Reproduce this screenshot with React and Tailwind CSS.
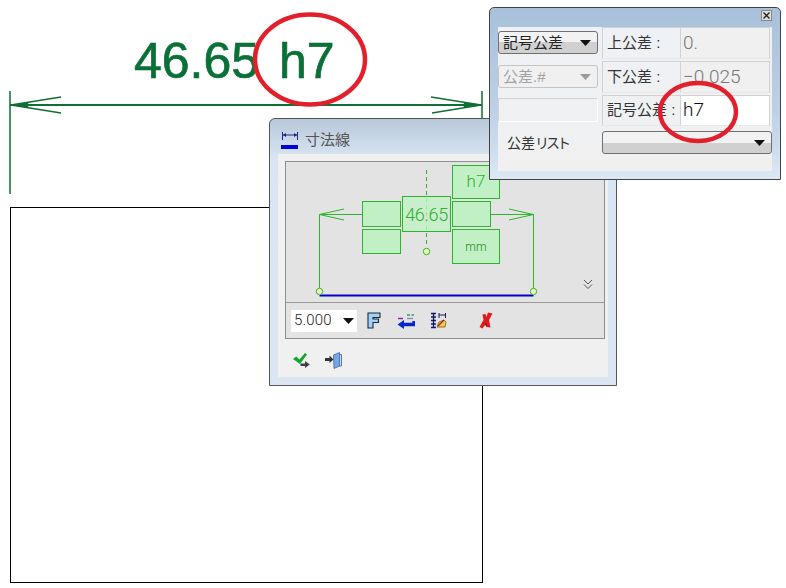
const SANS = "font-['Liberation_Sans','Noto_Sans_CJK_JP',sans-serif]"
const THIN = "font-['Roboto','Liberation_Sans',sans-serif] font-light"

function Arrow({ className = '' }) {
  return (
    <svg width="11" height="6" viewBox="0 0 11 6" className={className}>
      <path d="M0 0H11L5.5 6Z" fill="currentColor" />
    </svg>
  )
}

function Combo({ label, disabled, className = '' }) {
  const look = disabled
    ? 'border-[#c4c4c4] text-[#a2a2a2] bg-[#f0f0f0]'
    : 'border-[#6f6f6f] text-[#222] bg-gradient-to-b from-[#f2f2f2] from-50% to-[#d0d0d0] to-50%'
  return (
    <div className={`flex h-[23px] items-center justify-between rounded-[3px] border pl-[4px] pr-[6px] text-[15px] ${look} ${className}`}>
      <span className="translate-y-[1px]">{label}</span>
      <Arrow className={disabled ? 'text-[#9a9a9a]' : 'text-[#111]'} />
    </div>
  )
}

function ToleranceRow({ label, value, active, tall }) {
  return (
    <div className={`mr-[2px] flex ${tall ? 'h-[31px]' : 'h-[32px]'} border border-[#d2d2d2] border-b-[#e8e8e8]`}>
      <div className="flex w-[77px] items-center whitespace-nowrap pl-[4px] text-[15px] text-[#333]">{label}</div>
      <div
        className={`flex flex-1 items-center border-l border-[#d2d2d2] pl-[2px] text-[19px] ${THIN} ${
          active ? 'bg-white text-[#111]' : 'bg-[#f0f0f0] text-[#777]'
        }`}
      >
        {value}
      </div>
    </div>
  )
}

function TitleIcon() {
  return (
    <svg width="18" height="20" viewBox="0 0 18 20">
      <path d="M1.5 1V9M16.5 1V9" stroke="#1a2a80" strokeWidth="1" />
      <path d="M2 4H16" stroke="#1a2a80" strokeWidth="1" />
      <path d="M2 4L5 2V6ZM16 4L13 2V6Z" fill="#1a2a80" />
      <rect x="0" y="14" width="17" height="4" fill="#0000e0" />
    </svg>
  )
}

function FontIcon() {
  return (
    <svg width="14" height="17" viewBox="0 0 14 17">
      <path d="M1 1H13V5.5H6V7H11.5V10.5H6V16H1Z" fill="#9fd2f5" stroke="#1c2a3c" strokeWidth="1.1" />
    </svg>
  )
}

function WrapIcon() {
  return (
    <svg width="18" height="16" viewBox="0 0 18 16">
      <path d="M1 5.5H6" stroke="#a020a0" strokeWidth="1.5" />
      <path d="M10 2H13M14.5 2H17" stroke="#3a9a6a" strokeWidth="1.4" />
      <path d="M10 5.5H16" stroke="#8888a8" strokeWidth="1.3" />
      <path d="M17 8V11.5H6" fill="none" stroke="#0a28c8" strokeWidth="3.4" />
      <path d="M0.5 11.5L7 7V16Z" fill="#0a28c8" />
    </svg>
  )
}

function RulerIcon() {
  return (
    <svg width="17" height="17" viewBox="0 0 17 17">
      <path d="M1 1.5H6M1 15.5H6M3.5 1.5V15.5" stroke="#101a60" strokeWidth="1.3" />
      <path d="M1 5H6M1 8.5H6M1 12H6" stroke="#101a60" strokeWidth="1.3" />
      <path d="M9 1V6M15.5 1V6M9 3H15.5" stroke="#101a60" strokeWidth="1" />
      <path d="M7 15L9 10L14 8L16 10L15 15Z" fill="#f0d050" stroke="#7a5a10" strokeWidth="0.8" />
      <path d="M8 14L14 8" stroke="#b02020" strokeWidth="1.2" />
    </svg>
  )
}

function DeleteIcon() {
  return (
    <svg width="14" height="17" viewBox="0 0 14 17">
      <path d="M9 0.5L13.5 1.5L10 8L11.5 15.5L7.5 15L6.5 11L3.5 16.5L0.5 15L4.5 8L3.5 2.5L6.5 2L7.5 5Z" fill="#e01818" />
      <path d="M3.5 16.5L7 10L8 15L6 13Z" fill="#801010" />
    </svg>
  )
}

function OkIcon() {
  return (
    <svg width="17" height="15" viewBox="0 0 17 15">
      <path d="M0 6L3.2 3.5L6.5 6.5L12 0L14 1.5L7 11Z" fill="#10a828" />
      <path d="M7.5 10.5H12V8L16.8 11.5L12 15V13H7.5Z" fill="#404040" />
    </svg>
  )
}

function ExitIcon() {
  return (
    <svg width="17" height="17" viewBox="0 0 17 17">
      <path d="M10 2.5H16.5V14H14" fill="#d0e0f8" stroke="#4a78c0" strokeWidth="1" />
      <path d="M8.5 3L14.5 0.5V14L9 16.5Z" fill="#78a4e8" stroke="#3a68b0" strokeWidth="0.8" />
      <path d="M0 6H4.5V3.5L8.5 7.5L4.5 11V9H0Z" fill="#333" />
    </svg>
  )
}

function Node({ className, children }) {
  return (
    <div className={`absolute flex items-center justify-center border border-[#2cb52c] bg-[#c0f0c4] text-[#30b030] ${THIN} ${className}`}>
      {children}
    </div>
  )
}

function DimensionPreview() {
  return (
    <div className="relative h-[141px] border-b border-[#9a9a9a]">
      <svg width="319" height="140" viewBox="0 0 319 140" className="absolute left-0 top-0">
        <g fill="none" stroke="#2cb52c">
          <path d="M33.5 126V52.5H76" />
          <path d="M247.5 126V52.5H205" />
          <path d="M33.5 52.5L58 47M33.5 52.5L58 58" />
          <path d="M247.5 52.5L223 47M247.5 52.5L223 58" />
          <path d="M140.5 8V85" strokeDasharray="4 3" />
        </g>
        <path d="M33.5 133.5H247.5" stroke="#0000d0" strokeWidth="2" />
        <g fill="#eef8b8" stroke="#2cb52c">
          <circle cx="33.5" cy="129.5" r="3.2" />
          <circle cx="247.5" cy="129.5" r="3.2" />
          <circle cx="140.5" cy="89.5" r="3.2" />
        </g>
        <path d="M298 118L302 122L306 118M298 122.5L302 126.5L306 122.5" fill="none" stroke="#555" strokeWidth="1" />
      </svg>
      <Node className="left-[166px] top-[3px] h-[34px] w-[48px] text-[17px]">h7</Node>
      <Node className="left-[116px] top-[34px] h-[36px] w-[49px] bg-[#c0f0c4]/80 text-[18px] tracking-[-0.3px]">46.65</Node>
      <Node className="left-[76px] top-[39px] h-[26px] w-[39px]" />
      <Node className="left-[76px] top-[67px] h-[25px] w-[39px]" />
      <Node className="left-[166px] top-[39px] h-[26px] w-[39px]" />
      <Node className="left-[166px] top-[67px] h-[35px] w-[48px] text-[12px] !text-[#208a20]">mm</Node>
    </div>
  )
}

function DimensionWindow() {
  return (
    <div className="absolute left-[269px] top-[118px] flex h-[268px] w-[348px] flex-col rounded-t-[6px] border border-[#555] bg-gradient-to-b from-[#b8c8da] from-0% via-[#d9e5f2] via-15% to-[#dbe6f2] px-[8px] pb-[8px]">
      <div className="flex h-[35px] flex-none items-center gap-[6px] pl-[3px] pt-[8px]">
        <TitleIcon />
        <span className="text-[15px] text-[#555]">寸法線</span>
      </div>
      <div className="flex flex-1 flex-col bg-[#f0f0f0] px-[7px] pt-[7px]">
        <div className="w-[320px] border border-[#8e8e8e] bg-[#e3e3e3]">
          <DimensionPreview />
          <div className="flex h-[35px] items-center pl-[5px]">
            <div className={`flex h-[22px] w-[66px] items-center justify-between bg-white pl-[3px] pr-[3px] text-[15px] tracking-[0.2px] text-[#222] ${THIN}`}>
              5.000
              <Arrow className="text-[#111]" />
            </div>
            <div className="ml-[10px] flex w-[14px]"><FontIcon /></div>
            <div className="ml-[16px] flex"><WrapIcon /></div>
            <div className="ml-[15px] flex"><RulerIcon /></div>
            <div className="ml-[32px] flex"><DeleteIcon /></div>
          </div>
        </div>
        <div className="flex items-center gap-[15px] pl-[8px] pt-[13px]">
          <OkIcon />
          <ExitIcon />
        </div>
      </div>
    </div>
  )
}

function ToleranceWindow() {
  return (
    <div className="absolute left-[489px] top-[7px] flex h-[173px] w-[292px] flex-col rounded-t-[5px] border border-[#444] bg-gradient-to-b from-[#a9c0da] via-[#bdd0e5] via-60% to-[#dce8f4] px-[8px] pb-[8px]">
      <div className="flex h-[19px] flex-none items-start justify-end pt-[2px]">
        <div className="flex h-[11px] w-[11px] items-center justify-center border border-[#888] bg-[#ddd]">
          <svg width="7" height="7" viewBox="0 0 7 7">
            <path d="M0.5 0.5L6.5 6.5M6.5 0.5L0.5 6.5" stroke="#222" strokeWidth="1.4" />
          </svg>
        </div>
      </div>
      <div className="flex-1 bg-gradient-to-b from-[#eef1f5] to-[#f0f0f0]">
        <div className="flex">
          <div className="flex w-[100px] flex-col pt-[4px]">
            <Combo label="記号公差" />
            <Combo label="公差.#" disabled className="mt-[11px]" />
            <div className="mt-[10px] h-[24px] border border-[#d2d2d2] border-b-white border-r-white" />
          </div>
          <div className="ml-[4px] flex flex-1 flex-col gap-[2px]">
            <ToleranceRow label="上公差 :" value="0." />
            <ToleranceRow label="下公差 :" value="−0.025" />
            <ToleranceRow label="記号公差 :" value="h7" active tall />
          </div>
        </div>
        <div className="mt-[5px] flex items-center">
          <div className="w-[104px] translate-y-[1px] pl-[9px] text-[14px] text-[#333]">
            公差<span className="tracking-[-3px]">リスト</span>
          </div>
          <Combo label="" className="h-[22px] flex-1" />
        </div>
      </div>
    </div>
  )
}

export default function App() {
  return (
    <div className={`relative h-[588px] w-[786px] overflow-hidden bg-white ${SANS}`}>
      <div className="absolute left-[10px] top-[207px] h-[376px] w-[473px] border border-black" />
      <svg width="500" height="200" viewBox="0 0 500 200" className="absolute left-0 top-0">
        <g stroke="#0f6f35" fill="none">
          <path d="M10 91V194M482 91V120" strokeWidth="1.5" />
          <path d="M10 105H482" strokeWidth="2" />
          <path d="M11 105L61 97M11 105L61 113" strokeWidth="1.3" />
          <path d="M481 105L431 97M481 105L432 113" strokeWidth="1.3" />
          <path d="M12 105L28 102.5V107.5Z M480 105L464 102.5V107.5Z" fill="#0f6f35" strokeWidth="0.5" />
        </g>
      </svg>
      <div className="absolute left-[134px] top-[31px] whitespace-pre text-[50px] leading-[60px] text-[#0a7038] [word-spacing:6px] [-webkit-text-stroke:0.7px_#0a7038]">
        46.65 h7
      </div>
      <DimensionWindow />
      <ToleranceWindow />
      <svg width="786" height="200" viewBox="0 0 786 200" className="absolute left-0 top-0">
        <g fill="none" stroke="#e2202c" strokeWidth="4.5">
          <ellipse cx="310" cy="59.5" rx="55" ry="45" />
          <ellipse cx="698" cy="112" rx="38" ry="29" />
        </g>
      </svg>
    </div>
  )
}
